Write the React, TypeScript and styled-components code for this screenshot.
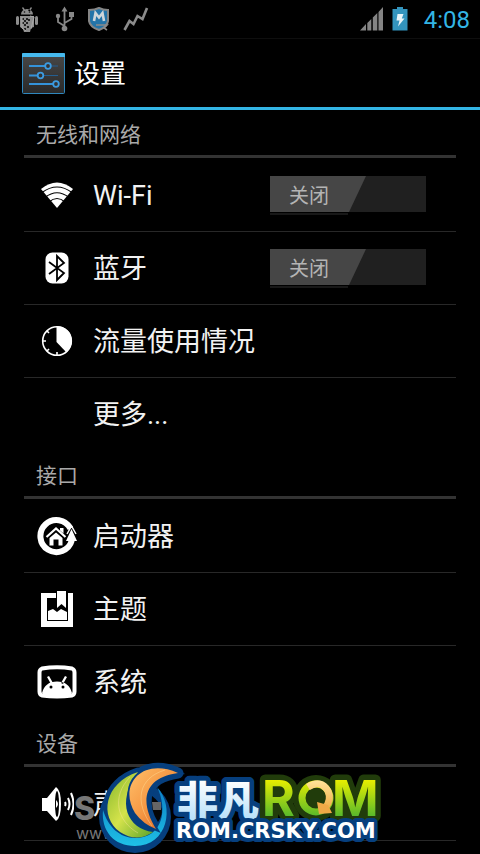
import React from "react";
import styled, { createGlobalStyle } from "styled-components";

const GlobalStyle = createGlobalStyle`
  *, *::before, *::after { box-sizing: border-box; }
  html { background: #000; }
  body {
    margin: 0;
    background: #000;
    color: #f2f2f2;
    font-family: Roboto, "Noto Sans CJK SC", sans-serif;
    overflow-x: hidden;
  }
  ul { list-style: none; margin: 0; padding: 0; }
`;

const Screen = styled.div`
  position: relative;
  height: 100vh;
  overflow: hidden;
`;

const StatusBar = styled.div`
  display: flex;
  align-items: center;
  justify-content: space-between;
  height: 39px;
  padding: 0 10px 0 12px;
  border-bottom: 1px solid #0e0e0e;
`;

const StatusGroup = styled.div<{ $gap: number }>`
  display: flex;
  align-items: center;
  gap: ${(p) => p.$gap}px;
  svg { display: block; }
`;

const Clock = styled.time`
  margin-left: 8px;
  padding-top: 2px;
  font-size: 24px;
  line-height: 36px;
  color: #33b5e5;
`;

const ActionBar = styled.header`
  display: flex;
  align-items: center;
  gap: 8px;
  height: 71px;
  padding: 2px 20px 0;
  border-bottom: 3px solid #33b5e5;
`;

const Title = styled.h1`
  margin: 0;
  font-size: 26px;
  line-height: 36px;
  font-weight: 400;
  color: #fff;
`;

const List = styled.main`
  padding: 0 24px;
`;

const SectionTitle = styled.h2`
  height: 48px;
  margin: 0 0 1px;
  padding: 9px 12px 0;
  border-bottom: 3px solid #333;
  font-size: 21px;
  line-height: 32px;
  font-weight: 400;
  color: #a9a9a9;
`;

const Row = styled.li`
  display: flex;
  align-items: center;
  height: 73px;
  padding-right: 30px;
  border-bottom: 1px solid #282828;
  &:last-child { border-bottom-color: transparent; }
`;

const LastRow = styled(Row)`
  &:last-child { border-bottom-color: #282828; }
`;

const RowLink = styled.a`
  display: flex;
  flex: 1;
  align-items: center;
  color: inherit;
  text-decoration: none;
`;

const IconSlot = styled.span`
  display: flex;
  justify-content: center;
  width: 66px;
  margin-right: 3px;
  svg { display: block; }
`;

const Label = styled.span`
  padding-top: 2px;
  font-size: 27px;
  line-height: 36px;
`;

const Switch = styled.button`
  position: relative;
  width: 156px;
  height: 36px;
  margin-bottom: 2px;
  padding: 0;
  border: 0;
  background: #202020;
  color: #b4b4b4;
  font: inherit;
  font-size: 20px;
  line-height: 40px;
  text-align: left;
  &::after {
    content: "";
    position: absolute;
    left: 0;
    top: 37px;
    width: 78px;
    height: 2px;
    background: #181818;
  }
`;

const Thumb = styled.span`
  display: block;
  width: 96px;
  height: 36px;
  padding-left: 19px;
  background: #464646;
  clip-path: polygon(0 0, 100% 0, 79px 100%, 0 100%);
`;

const Watermark = styled.div`
  position: absolute;
  left: 72px;
  bottom: 0;
  svg { display: block; }
`;

const RobotIcon = () => (
  <svg width="30" height="30" viewBox="0 2 30 30" fill="#8d8d8d">
    <path d="M9 12.500a6 5.500 0 0 1 12 0zM10 6l1-1 3 4h-2zM20 6l-1-1-3 4h2z" />
    <rect x="4" y="14" width="3" height="9" rx="1.5" />
    <rect x="23" y="14" width="3" height="9" rx="1.5" />
    <path d="M8 14h14v11l-3 1-1 4h-6l-1-3-3-2z" />
    <path d="M10 16h2v2h-2zM14 16h2v2h-2zM12 18h2v2h-2zM10 20h2v2h-2zM14 20h2v2h-2zM12 22h2v2h-2zM15 24h2v2h-2zM12 26h2v2h-2zM16 17h2v2h-2z" fill="#222" />
    <path d="M18 14l4 1-3 12M10 15v11l4 3" fill="none" stroke="#aaa" />
    <circle cx="12.500" cy="10" r=".8" fill="#111" /><circle cx="17.500" cy="10" r=".8" fill="#111" />
  </svg>
);

const UsbIcon = () => (
  <svg width="20" height="26" viewBox="0 -1 20 26" fill="none" stroke="#888" strokeWidth="1.8">
    <path d="M9.500 3v18M9.500 19L3 15V10M9.500 16l7-4V8" />
    <path d="M9.500-.5L6.500 4.500h6z" fill="#888" stroke="none" />
    <circle cx="9.500" cy="21.500" r="2.800" fill="#888" stroke="none" />
    <circle cx="3" cy="9" r="2.200" fill="#888" stroke="none" />
    <path d="M14 5h5v5h-5z" fill="#888" stroke="none" />
  </svg>
);

const ShieldIcon = () => (
  <svg width="22" height="24" viewBox="0 0 22 24">
    <path d="M1 3Q7 3 11 1q4 2 9 2v11q-1 6-9 9Q2 20 1 14z" fill="#2474a8" stroke="#858585" strokeWidth="2" />
    <path d="M6 14l1.500-8L11 10.500 14.500 6 16 14" fill="none" stroke="#cfd6da" strokeWidth="2.600" />
    <path d="M8 18h11l-3 3 3 2" fill="none" stroke="#8b8b8b" strokeWidth="1.600" />
  </svg>
);

const TrendIcon = () => (
  <svg width="26" height="26" viewBox="0 0 26 26">
    <path d="M1.500 24l5-9 4 3 4-8 5 3L24 2" fill="none" stroke="#8b8b8b" strokeWidth="2.600" />
  </svg>
);

const SignalIcon = () => (
  <svg width="24" height="24" viewBox="0 0 24 24" fill="#848484">
    <path d="M0 23.500L6 17v6.500zM7.300 16l4-4v11.500h-4zM12.800 10.500l4.500-4.500v17.500h-4.500zM18.500 5L23 0v23.500h-4.500z" />
  </svg>
);

const BatteryIcon = () => (
  <svg width="16" height="24" viewBox="0 0 16 24">
    <path d="M5 0h6v2h4.500v21.500H.5V2H5z" fill="#3394bd" />
    <path d="M5.500 7h6L9.800 11.500h2.700L6 19.500l1.500-6H4.500z" fill="#e8f4f8" />
  </svg>
);

const SettingsIcon = () => (
  <svg width="46" height="44" viewBox="0 0 46 44">
    <defs>
      <linearGradient id="panel" x2="0" y2="1">
        <stop stopColor="#484848" /><stop offset="1" stopColor="#292929" />
      </linearGradient>
    </defs>
    <rect x="2.500" y="1.500" width="42" height="40" rx="1" fill="url(#panel)" stroke="#2f87bd" />
    <path d="M2 5V2q0-1 1-1h41q1 0 1 1v3z" fill="#46b9ed" />
    <path d="M9 14h16M9 23.500h8M9 32h24" stroke="#3493da" strokeWidth="1.800" />
    <path d="M30 14h8M22 23.500h16" stroke="#245f91" strokeWidth="1.200" />
    <g fill="#333" stroke="#3c9be0" strokeWidth="1.800">
      <circle cx="28" cy="14" r="2.800" /><circle cx="20.500" cy="23.500" r="2.800" /><circle cx="36" cy="32" r="2.800" />
    </g>
  </svg>
);

const WifiIcon = () => (
  <svg width="34" height="28" viewBox="0 0 34 28">
    <path d="M1 8Q17-5 33 8L17 27z" fill="#fff" />
    <path d="M2 11.500Q17 .5 32 11.500M5 16.500q12-9.500 24 0M9 21q8-7 16 0" fill="none" stroke="#000" strokeWidth="1.200" />
  </svg>
);

const BluetoothIcon = () => (
  <svg width="24" height="32" viewBox="0 0 24 32">
    <rect x=".5" y=".5" width="23" height="31" rx="7" fill="#fff" />
    <path d="M4 10l15 11-7 7V4l7 7L4 22" fill="none" stroke="#000" strokeWidth="1.800" />
  </svg>
);

const DataIcon = () => (
  <svg width="32" height="32" viewBox="0 0 32 32">
    <circle cx="16" cy="16" r="14.300" fill="none" stroke="#fff" strokeWidth="1.600" />
    <path d="M15.500 1a15 15 0 0 1 10 26.500L15.500 17z" fill="#fff" />
    <path d="M2 16h3M16 27v3M6 6l2 2M6 26l2-2" stroke="#fff" strokeWidth="1.600" />
  </svg>
);

const LauncherIcon = () => (
  <svg width="40" height="40" viewBox="0 0 40 40">
    <path d="M33.500 12.500a16 16 0 1 0 1.300 12" fill="none" stroke="#fff" strokeWidth="6" />
    <path d="M34.500 13l5.500 12H29z" fill="#fff" />
    <path d="M30 18l4.500-8 4.500 8" fill="none" stroke="#fff" strokeWidth="1.500" />
    <path d="M9.500 21l9.500-8.500 9.500 8.500" fill="none" stroke="#fff" strokeWidth="2.200" />
    <path d="M23 12h3.500v5.500L23 14.500zM12.500 22l6.500-5.500 6.500 5.500V29.500h-4V23.500h-5v6h-4z" fill="#fff" />
  </svg>
);

const ThemeIcon = () => (
  <svg width="34" height="36" viewBox="0 0 34 36" fill="#fff">
    <path d="M1 2h15v5H7v23h21V2h5v34H1z" />
    <path d="M17 0h9v17l-4.500-4-4.500 4z" />
    <path d="M8 29v-9l5-2 4 3 4-3 6 3v8z" />
  </svg>
);

const SystemIcon = () => (
  <svg width="40" height="34" viewBox="0 0 40 34">
    <path d="M5 3.500q15-2.500 30 0 2.500 1 2.500 4v19q0 3-2.500 4-15 2-30 0-2.500-1-2.500-4v-19q0-3 2.500-4z" fill="none" stroke="#fff" strokeWidth="4" />
    <path d="M5 28q3-11.500 15-11.500T35 28l-2 3H7zM10 12l2-1 4 7-2 1zM30 12l-2-1-4 7 2 1z" fill="#fff" />
    <circle cx="14" cy="22" r="1.500" /><circle cx="26" cy="22" r="1.500" />
  </svg>
);

const SoundIcon = () => (
  <svg width="34" height="36" viewBox="0 0 34 36">
    <path d="M2 12h5L16 1q5 3 5 17t-5 17L7 25H2z" fill="#fff" />
    <ellipse cx="17" cy="18" rx="2" ry="13" fill="#000" />
    <path d="M16 14q4 4 0 8z" fill="#fff" />
    <path d="M25 16q1 2 0 4M28 12q3 6 0 12M31 7q5 11 0 22" fill="none" stroke="#fff" strokeWidth="2" />
  </svg>
);

type Item = { label: string; icon?: React.ReactNode; toggle?: boolean };

const sections: { title: string; items: Item[] }[] = [
  {
    title: "无线和网络",
    items: [
      { label: "Wi-Fi", icon: <WifiIcon />, toggle: true },
      { label: "蓝牙", icon: <BluetoothIcon />, toggle: true },
      { label: "流量使用情况", icon: <DataIcon /> },
      { label: "更多...", icon: null },
    ],
  },
  {
    title: "接口",
    items: [
      { label: "启动器", icon: <LauncherIcon /> },
      { label: "主题", icon: <ThemeIcon /> },
      { label: "系统", icon: <SystemIcon /> },
    ],
  },
  { title: "设备", items: [{ label: "声音", icon: <SoundIcon /> }] },
];

const RomLogo = () => (
  <svg width="320" height="99" viewBox="72 755 320 99">
    <defs>
      <linearGradient id="green" gradientUnits="userSpaceOnUse" x1="0" y1="780" x2="0" y2="817"><stop stopColor="#e8ee00" /><stop offset="1" stopColor="#55b82c" /></linearGradient>
      <linearGradient id="leaf" x2="1" y2="1"><stop stopColor="#83b52b" /><stop offset=".5" stopColor="#d5e34b" /><stop offset="1" stopColor="#5aa329" /></linearGradient>
      <linearGradient id="flame" x2="1" y2="1"><stop stopColor="#ffc06a" /><stop offset=".5" stopColor="#f59743" /><stop offset="1" stopColor="#d9571b" /></linearGradient>
      <linearGradient id="ice" gradientUnits="userSpaceOnUse" x1="0" y1="780" x2="0" y2="818"><stop stopColor="#fff" /><stop offset="1" stopColor="#b9e2fa" /></linearGradient>
      <linearGradient id="gold" gradientUnits="userSpaceOnUse" x1="0" y1="780" x2="0" y2="815"><stop stopColor="#ffe59a" /><stop offset="1" stopColor="#eda135" /></linearGradient>
      <linearGradient id="sea" x2="0" y2="1"><stop stopColor="#0b7fc4" /><stop offset="1" stopColor="#1fc0e6" /></linearGradient>
    </defs>
    <g fill="#777" fontFamily="Inter, sans-serif">
      <text x="74" y="820" fontSize="32" fontWeight="800">S</text>
      <text x="76" y="839" fontSize="16">www</text>
    </g>
    <g fill="#063f7e" stroke="#063f7e" strokeLinejoin="round">
      <circle cx="135" cy="817" r="36" stroke="none" />
      <path d="M138 772C104 783 99 817 120 832q17 11 33 0C128 829 115 803 138 772z" strokeWidth="9" />
      <path d="M178 773C142 757 118 785 135 813q8 11 21 16C140 803 142 778 178 773z" strokeWidth="11" />
    </g>
    <path d="M152 796q16 12 6 26-8-12-6-26z" fill="#050505" />
    <path d="M152 802h9v8h-8z" fill="#666" />
    <path d="M157 787c18 19 11 59-22 59-21 0-34-15-32-36 5 17 17 28 32 28 28 0 33-29 22-51z" fill="url(#sea)" />
    <path d="M138 772C104 783 99 817 120 832q17 11 33 0C128 829 115 803 138 772z" fill="url(#leaf)" />
    <path d="M178 773C142 757 118 785 135 813q8 11 21 16C140 803 142 778 178 773z" fill="url(#flame)" stroke="#063f7e" strokeWidth="4" paintOrder="stroke" />
    <path d="M130 777c-19 20-13 44 8 56M165 770c-27 8-31 32-13 56" fill="none" stroke="#ffe6a0" strokeOpacity=".4" />
    <g strokeLinejoin="round" paintOrder="stroke">
      <text x="177" y="816" fontFamily="Noto Sans CJK SC, sans-serif" fontSize="41" fontWeight="900" fill="url(#ice)" stroke="#063f7e" strokeWidth="10">非凡</text>
      <circle cx="316" cy="798" r="15" fill="none" stroke="#213c0b" strokeWidth="16" />
      <text x="262" y="816" fontFamily="Inter, sans-serif" fontSize="50" fontWeight="700" fill="url(#green)" stroke="#213c0b" strokeWidth="11">R</text>
      <text x="332" y="816" fontFamily="Inter, sans-serif" fontSize="50" fontWeight="700" fill="url(#green)" stroke="#213c0b" strokeWidth="11">M</text>
    </g>
    <circle cx="316" cy="798" r="14" fill="#213c0b" stroke="url(#green)" strokeWidth="7" />
    <path d="M308 787q13-8 20 4 4 9-3 17" fill="none" stroke="url(#gold)" strokeWidth="7" />
    <path d="M317 802l2 12 13-1-4-8z" fill="#f0a946" />
    <text x="176" y="838" fontFamily="DejaVu Sans, sans-serif" fontSize="21" fontWeight="700" fill="#fff" stroke="#063f7e" strokeWidth="8" strokeLinejoin="round" paintOrder="stroke">ROM.CRSKY.COM</text>
  </svg>
);

export default function App() {
  return (
    <>
      <GlobalStyle />
      <Screen>
        <StatusBar>
          <StatusGroup $gap={13}><RobotIcon /><UsbIcon /><ShieldIcon /><TrendIcon /></StatusGroup>
          <StatusGroup $gap={8}><SignalIcon /><BatteryIcon /><Clock>4:08</Clock></StatusGroup>
        </StatusBar>
        <ActionBar><SettingsIcon /><Title>设置</Title></ActionBar>
        <List>
          {sections.map((s, i) => {
            const ListRow = i === sections.length - 1 ? LastRow : Row;
            return (
              <section key={s.title}>
                <SectionTitle>{s.title}</SectionTitle>
                <ul>
                  {s.items.map((it) => (
                    <ListRow key={it.label}>
                      <RowLink href="#"><IconSlot>{it.icon}</IconSlot><Label>{it.label}</Label></RowLink>
                      {it.toggle && <Switch type="button" role="switch" aria-checked={false} aria-label={it.label}><Thumb>关闭</Thumb></Switch>}
                    </ListRow>
                  ))}
                </ul>
              </section>
            );
          })}
        </List>
        <Watermark><RomLogo /></Watermark>
      </Screen>
    </>
  );
}
